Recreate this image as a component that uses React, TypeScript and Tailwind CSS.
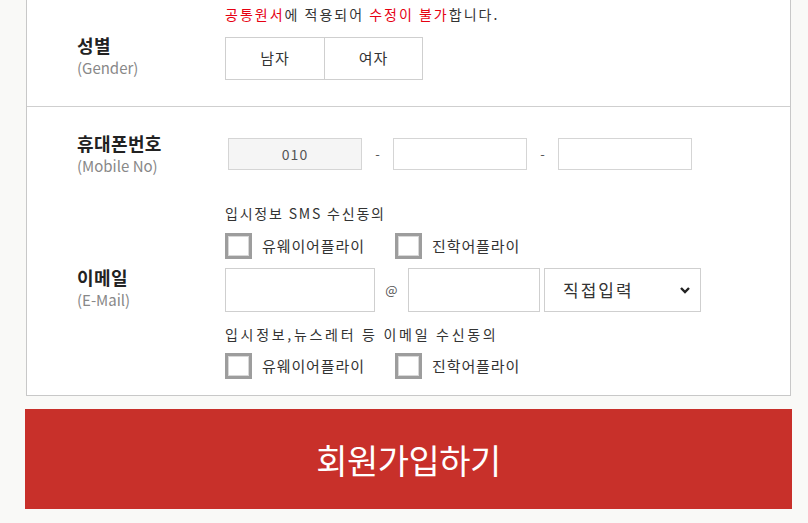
import React from "react";

const font = { fontFamily: '"Noto Sans CJK KR", "Noto Sans", sans-serif' };

function Label({ ko, en, className = "" }: { ko: string; en: string; className?: string }) {
  return (
    <div className={"flex flex-col pl-[50px] " + className}>
      <span className="text-[18px] font-bold leading-[23px] tracking-[0.4px] text-[#222]">{ko}</span>
      <span className="text-[15px] leading-[21px] text-[#888]">{en}</span>
    </div>
  );
}

function Check({ label }: { label: string }) {
  return (
    <label className="flex items-center gap-[10px]">
      <span className="box-border h-[26px] w-[27px] border-[3px] border-[#9d9d9d] bg-white shadow-[inset_0_0_0_1px_#d8d8d8]" />
      <span className="text-[15px] leading-[20px] tracking-[0.9px] text-[#333]">{label}</span>
    </label>
  );
}

function CheckRow() {
  return (
    <div className="flex h-[26px] items-center">
      <div className="w-[170px]">
        <Check label="유웨이어플라이" />
      </div>
      <Check label="진학어플라이" />
    </div>
  );
}

export default function App() {
  return (
    <div className="h-[523px] w-[808px] overflow-hidden bg-[#f9f9f7]" style={font}>
      <div className="ml-[26px] w-[765px] border-x border-b border-[#c8c8c8] bg-white">
        {/* gender section */}
        <div className="grid grid-cols-[198px_1fr] pt-[3px] pb-[26px]">
          <div />
          <div className="text-[14px] leading-[22px] tracking-[2px] text-[#333]">
            <span className="text-[#e60012]">공통원서</span>에 적용되어{" "}
            <span className="text-[#e60012]">수정이 불가</span>합니다.
          </div>
          <div className="mt-[12px] flex h-[43px] items-center">
            <Label ko="성별" en="(Gender)" className="-mt-[6px]" />
          </div>
          <div className="mt-[12px] flex h-[43px]">
            <button className="h-[43px] w-[100px] border border-[#cfcfcf] bg-white text-[15px] tracking-[1px] text-[#333]">남자</button>
            <button className="h-[43px] w-[98px] border border-l-0 border-[#cfcfcf] bg-white text-[15px] tracking-[1px] text-[#333]">여자</button>
          </div>
        </div>
        {/* contact section */}
        <div className="grid grid-cols-[198px_1fr] border-t border-[#cfcfcf] pt-[31px] pb-[16px]">
          <div className="flex h-[32px] items-center">
            <Label ko="휴대폰번호" en="(Mobile No)" />
          </div>
          <div className="flex h-[32px] items-center pl-[3px]">
            <div className="flex h-[32px] w-[134px] items-center justify-center border border-[#d5d5d5] bg-[#f5f5f5] text-[14px] tracking-[1px] text-[#555]">010</div>
            <span className="w-[31px] text-center text-[13px] text-[#555]">-</span>
            <input className="box-border h-[32px] w-[134px] border border-[#d5d5d5] bg-white outline-none" />
            <span className="w-[31px] text-center text-[13px] text-[#555]">-</span>
            <input className="box-border h-[32px] w-[134px] border border-[#d5d5d5] bg-white outline-none" />
          </div>

          <div />
          <div className="flex flex-col gap-[10px] pt-[33px]">
            <span className="text-[14px] leading-[20px] tracking-[1.8px] text-[#333]">입시정보 SMS 수신동의</span>
            <CheckRow />
          </div>

          <div className="mt-[9px] flex h-[44px] items-center">
            <Label ko="이메일" en="(E-Mail)" className="-mt-[5px]" />
          </div>
          <div className="mt-[9px] flex h-[44px] items-center">
            <input className="box-border h-[44px] w-[150px] border border-[#cfcfcf] bg-white outline-none" />
            <span className="w-[33px] text-center text-[13px] text-[#555]">@</span>
            <input className="box-border h-[44px] w-[132px] border border-[#cfcfcf] bg-white outline-none" />
            <div className="ml-[4px] flex h-[44px] w-[157px] items-center justify-between border border-[#cfcfcf] bg-white pl-[18px] pr-[9px]">
              <span className="text-[17px] tracking-[2px] text-[#333]">직접입력</span>
              <svg width="12" height="12" viewBox="0 0 12 12">
                <path d="M2 4 L6 8 L10 4" fill="none" stroke="#222" strokeWidth="2.4" />
              </svg>
            </div>
          </div>

          <div />
          <div className="flex flex-col gap-[9px] pt-[12px]">
            <span className="text-[14px] leading-[20px] tracking-[2.7px] text-[#333]">입시정보,뉴스레터 등 이메일 수신동의</span>
            <CheckRow />
          </div>
        </div>
      </div>
      <button className="mt-[13px] ml-[25px] flex h-[100px] w-[767px] items-center justify-center bg-[#c8302a] text-[34px] tracking-[-0.5px] text-white">
        회원가입하기
      </button>
    </div>
  );
}
